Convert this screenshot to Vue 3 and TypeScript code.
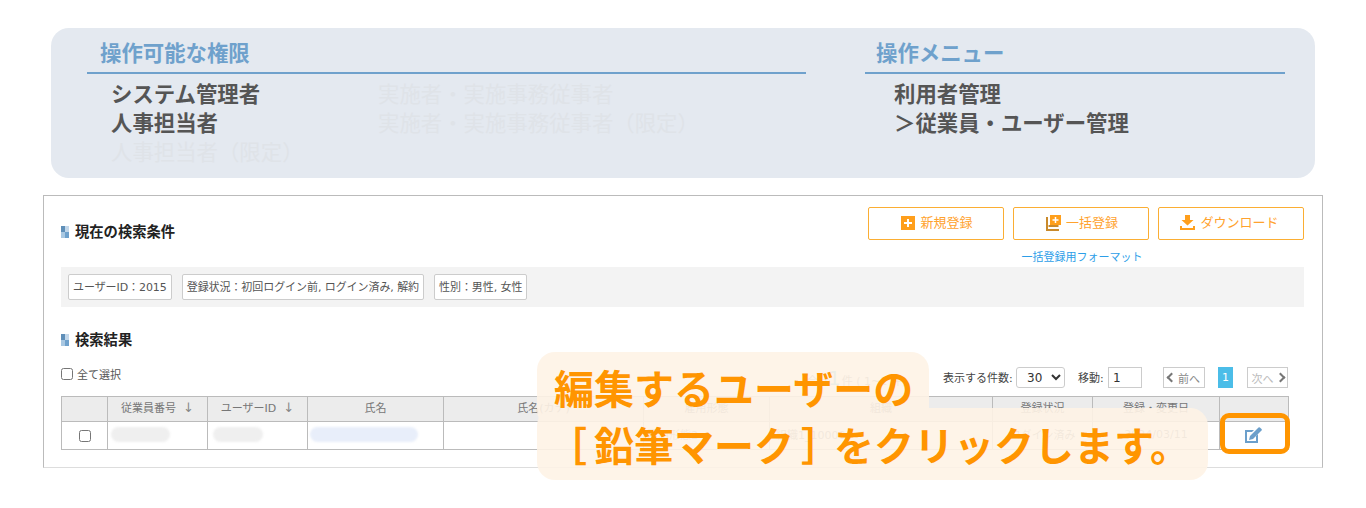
<script setup lang="ts">
interface Col { label: string; width: number; sort?: boolean }
const cols: Col[] = [
  { label: '', width: 46 },
  { label: '従業員番号', width: 100, sort: true },
  { label: 'ユーザーID', width: 100, sort: true },
  { label: '氏名', width: 136 },
  { label: '氏名(カナ)', width: 200 },
  { label: '雇用形態', width: 126 },
  { label: '組織', width: 223 },
  { label: '登録状況', width: 100 },
  { label: '登録・変更日', width: 127 },
  { label: '', width: 69 },
]
const tags = ['ユーザーID：2015', '登録状況：初回ログイン前, ログイン済み, 解約', '性別：男性, 女性']
</script>

<template>
  <div class="page">
    <section class="roles">
      <div class="role-left">
        <h2 class="role-head">操作可能な権限</h2>
        <div class="role-grid">
          <span class="on">システム管理者</span>
          <span class="off">実施者・実施事務従事者</span>
          <span class="on">人事担当者</span>
          <span class="off">実施者・実施事務従事者（限定）</span>
          <span class="off">人事担当者（限定）</span>
        </div>
      </div>
      <div class="role-right">
        <h2 class="role-head">操作メニュー</h2>
        <div class="menu">
          <span class="on">利用者管理</span>
          <span class="on">＞従業員・ユーザー管理</span>
        </div>
      </div>
    </section>

    <section class="main">
      <div class="head">
        <h3 class="title first"><i class="mark"><b></b><b></b><b></b><b></b></i>現在の検索条件</h3>
        <div class="actions">
          <div class="btns">
            <button class="btn b1">
              <svg width="14" height="14" viewBox="0 0 14 14"><rect width="14" height="14" fill="#ff9f1c" /><path d="M7 3v8M3 7h8" stroke="#fff" stroke-width="2" /></svg>
              新規登録
            </button>
            <button class="btn b1">
              <svg width="15" height="16" viewBox="0 0 15 16"><path d="M0 2h2v12h11v2H0z" fill="#c98a2c" /><rect x="2.500" y="10" width="10" height="2" fill="#c98a2c" /><rect x="4" y="0" width="11" height="10" fill="#ff9f1c" /><path d="M9.500 2v6M6.500 5h6" stroke="#fff" stroke-width="1.500" /></svg>
              一括登録
            </button>
            <button class="btn b2">
              <svg width="15" height="15" viewBox="0 0 15 15"><path d="M5 0h5v5h3.500L7.500 10.500 1.500 5H5z" fill="#ff9f1c" /><path d="M0 11h2v2h11v-2h2v4H0z" fill="#ff9f1c" /></svg>
              ダウンロード
            </button>
          </div>
          <div class="link-row"><a class="link">一括登録用フォーマット</a></div>
        </div>
      </div>

      <div class="strip">
        <span v-for="t in tags" :key="t" class="tag">{{ t }}</span>
      </div>

      <h3 class="title second"><i class="mark"><b></b><b></b><b></b><b></b></i>検索結果</h3>

      <div class="tools">
        <label class="all"><input type="checkbox" class="chk" />全て選択</label>
        <span class="total">合計<em>1</em>件 ( 1~1 件)</span>
        <span class="lbl per">表示する件数:</span>
        <select class="sel"><option>30</option></select>
        <span class="lbl mv">移動:</span>
        <input class="jump" value="1" />
        <span class="pg prev"><i class="chev l"></i>前へ</span>
        <span class="cur">1</span>
        <span class="pg next">次へ<i class="chev r"></i></span>
      </div>

      <table class="tbl">
        <colgroup><col v-for="(c, i) in cols" :key="i" :style="{ width: c.width + 'px' }" /></colgroup>
        <thead>
          <tr>
            <th v-for="(c, i) in cols" :key="i">{{ c.label }}<span v-if="c.sort" class="arrow">↓</span></th>
          </tr>
        </thead>
        <tbody>
          <tr>
            <td class="ck"><input type="checkbox" class="chk2" /></td>
            <td><div class="blob g1"></div></td>
            <td><div class="blob g2"></div></td>
            <td><div class="blob g3"></div></td>
            <td></td>
            <td class="emp">雇用形態2</td>
            <td class="org">組織1_10000</td>
            <td class="c">ログイン済み</td>
            <td class="c">2024/03/11</td>
            <td class="edit">
              <svg width="19" height="17" viewBox="0 0 19 17"><path d="M0 3h9L7 5H2v9h9V9l2-2v9H0z" fill="#6b9fcb" /><path d="M4 13l1-4 8.500-8.500a1 1 0 0 1 1.400 0l1.600 1.600a1 1 0 0 1 0 1.400L8 12z" fill="#6b9fcb" /></svg>
              <span class="hl"></span>
            </td>
          </tr>
        </tbody>
      </table>
    </section>

    <div class="callout">
      <div class="shape">
        <div class="s1"></div>
        <div class="s2"></div>
      </div>
      <div class="c1">編集するユーザーの</div>
      <div class="c2"><span class="open">［</span>鉛筆マーク<span class="close">］</span>をクリックします。</div>
    </div>
  </div>
</template>

<style scoped>
.page {
  position: relative;
  width: 1366px;
  height: 508px;
  overflow: hidden;
  background: #fff;
  font-family: "Noto Sans CJK JP", "Noto Sans", sans-serif;
  color: #555;
  padding-top: 28px;
  box-sizing: border-box;
}
.roles {
  margin-left: 51px;
  width: 1264px;
  height: 150px;
  box-sizing: border-box;
  background: #e4e9f0;
  border-radius: 18px;
  padding: 0 30px 0 36px;
  display: flex;
  gap: 59px;
}
.role-left { width: 719px; }
.role-right { width: 420px; }
.role-head {
  margin: 0;
  height: 46px;
  box-sizing: border-box;
  border-bottom: 2px solid #6fa1cc;
  padding: 8px 0 0 13px;
  font-size: 21.4px;
  line-height: 32px;
  font-weight: 700;
  color: #6fa1cc;
}
.role-right .role-head { padding-left: 11px; }
.role-grid {
  display: grid;
  grid-template-columns: 267px 1fr;
  padding: 4px 0 0 24px;
  font-size: 21.4px;
  line-height: 29px;
}
.on { font-weight: 700; color: #555; }
.off { color: #dfe3e8; }
.menu {
  display: flex;
  flex-direction: column;
  padding: 4px 0 0 29px;
  font-size: 21.4px;
  line-height: 29px;
}
.main {
  margin: 17px 0 0 43px;
  width: 1280px;
  height: 273px;
  box-sizing: border-box;
  border: 1px solid #bbb;
  border-bottom-color: #ddd;
  padding: 11px 18px 0 17px;
  font-family: "DejaVu Sans", "Noto Sans CJK JP", sans-serif;
}
.head {
  display: flex;
  justify-content: space-between;
  height: 60px;
}
.title {
  margin: 0;
  display: flex;
  align-items: center;
  font-size: 14.3px;
  line-height: 20px;
  height: 20px;
  font-weight: 700;
  color: #222;
}
.first { margin-top: 15px; }
.second { margin-top: 23px; }
.mark {
  display: grid;
  grid-template-columns: 4px 4px;
  grid-auto-rows: 6px;
  margin-right: 6px;
}
.mark b:nth-child(1) { background: #5f8fb8; }
.mark b:nth-child(2) { background: #c2d7ea; }
.mark b:nth-child(3) { background: #a9c8e2; }
.mark b:nth-child(4) { background: #6fa1cc; }
.actions { display: flex; flex-direction: column; }
.btns { display: flex; gap: 9px; }
.btn {
  height: 33px;
  box-sizing: border-box;
  background: #fff;
  border: 1px solid #fbae33;
  border-radius: 2px;
  color: #ffa22e;
  font: inherit;
  font-size: 13px;
  line-height: 20px;
  display: flex;
  align-items: center;
  justify-content: center;
  gap: 5px;
  padding: 0 0 2px 2px;
}
.b1 { width: 136px; }
.b2 { width: 146px; padding-left: 0; padding-right: 3px; }
.link-row { display: flex; }
.link {
  width: 136px;
  margin-left: 146px;
  margin-top: 9px;
  text-align: center;
  font-size: 11px;
  line-height: 18px;
  color: #2d9ee8;
  white-space: nowrap;
}
.strip {
  height: 40px;
  box-sizing: border-box;
  background: #f3f3f3;
  padding: 7px;
  display: flex;
  gap: 10px;
}
.tag {
  height: 26px;
  box-sizing: border-box;
  background: #fff;
  border: 1px solid #ccc;
  border-radius: 2px;
  padding: 2px 4px 0;
  font-size: 11px;
  letter-spacing: -0.07px;
  line-height: 22px;
  color: #555;
  white-space: nowrap;
}
.tools {
  margin-top: 17px;
  height: 21px;
  width: 1227px;
  display: flex;
  align-items: center;
  font-size: 11px;
  color: #444;
}
.all { display: flex; align-items: center; width: 746px; color: #555; margin-top: -7px; }
.chk { width: 12px; height: 12px; margin: 0 4px 0 0; }
.total { width: 136px; color: #888; white-space: nowrap; }
.total em { font-style: normal; font-size: 20px; color: #4bbde8; margin: 0 1px 0 -1px; line-height: 20px; }
.lbl { margin-top: -1px; }
.per { width: 73px; white-space: nowrap; }
.sel {
  width: 49px;
  height: 21px;
  font: inherit;
  font-size: 12px;
  background: #fff;
  border: 1px solid #ccc;
  border-radius: 3px;
  color: #333;
  padding: 0 0 0 6px;
}
.mv { margin-left: 13px; width: 30px; white-space: nowrap; }
.jump {
  width: 34px;
  height: 21px;
  box-sizing: border-box;
  border: 1px solid #ccc;
  padding: 0 4px;
  font: inherit;
  font-size: 12px;
  color: #333;
}
.pg {
  height: 21px;
  box-sizing: border-box;
  border: 1px solid #ccc;
  display: flex;
  align-items: center;
  justify-content: center;
  gap: 3px;
  font-size: 11px;
  color: #888;
}
.prev { width: 42px; margin-left: 21px; }
.next { width: 41px; color: #bbb; }
.cur {
  width: 15px;
  height: 21px;
  margin: 0 14px 0 13px;
  background: #4bbde8;
  color: #fff;
  text-align: center;
  line-height: 21px;
  font-size: 11px;
}
.chev {
  width: 5px;
  height: 5px;
  border-left: 2px solid #777;
  border-bottom: 2px solid #777;
}
.chev.l { transform: rotate(45deg); }
.chev.r { transform: rotate(225deg); }
.tbl {
  margin-top: 8px;
  width: 1227px;
  table-layout: fixed;
  border-collapse: collapse;
  font-size: 11px;
  color: #888;
}
.tbl th, .tbl td { border: 1px solid #bbb; padding: 0; }
.tbl th {
  height: 25px;
  box-sizing: border-box;
  padding-bottom: 4px;
  background: #ececec;
  font-weight: 400;
  color: #777;
  font-size: 11px;
  white-space: nowrap;
}
.tbl td { height: 28px; box-sizing: border-box; }
.arrow { margin-left: 7px; color: #888; font-size: 13px; }
.ck { text-align: center; }
.tbl .c { text-align: center; padding-bottom: 3px; }
.tbl .emp { padding: 0 0 3px 3px; }
.tbl .org { padding: 0 0 3px 6px; }
.chk2 { width: 12px; height: 12px; margin: 3px 0 0; }
.blob { height: 15px; border-radius: 8px; margin-bottom: 2px; filter: blur(1px); }
.g1 { width: 59px; margin-left: 3px; background: #efefef; }
.g2 { width: 50px; margin-left: 5px; background: #efefef; }
.g3 { width: 108px; margin-left: 2px; background: #e8eefa; }
.edit { position: relative; }
.edit svg { display: block; margin: 0 0 0 25px; }
.hl {
  position: absolute;
  left: 0;
  top: -9px;
  width: 70px;
  height: 41px;
  box-sizing: border-box;
  border: 5px solid #ff9500;
  border-radius: 9px;
}
.callout {
  position: absolute;
  left: 537px;
  top: 352px;
  color: #ff9500;
  font-weight: 700;
  font-size: 40px;
  line-height: 57px;
  white-space: nowrap;
}
.shape {
  position: absolute;
  inset: 0;
  opacity: 0.9;
}
.s1 {
  position: absolute;
  left: 0;
  top: 0;
  width: 392px;
  height: 76px;
  background: #fef3e6;
  border-radius: 18px;
}
.s2 {
  position: absolute;
  left: 0;
  top: 56px;
  width: 671px;
  height: 72px;
  background: #fef3e6;
  border-radius: 18px;
}
.c1 {
  position: relative;
  padding: 7px 0 0 17px;
}
.c2 {
  position: relative;
  padding: 0 0 0 17px;
}
.open { display: inline-block; margin: 0 7px 0 -7px; }
.close { display: inline-block; margin: 0 -7px 0 7px; }
</style>
